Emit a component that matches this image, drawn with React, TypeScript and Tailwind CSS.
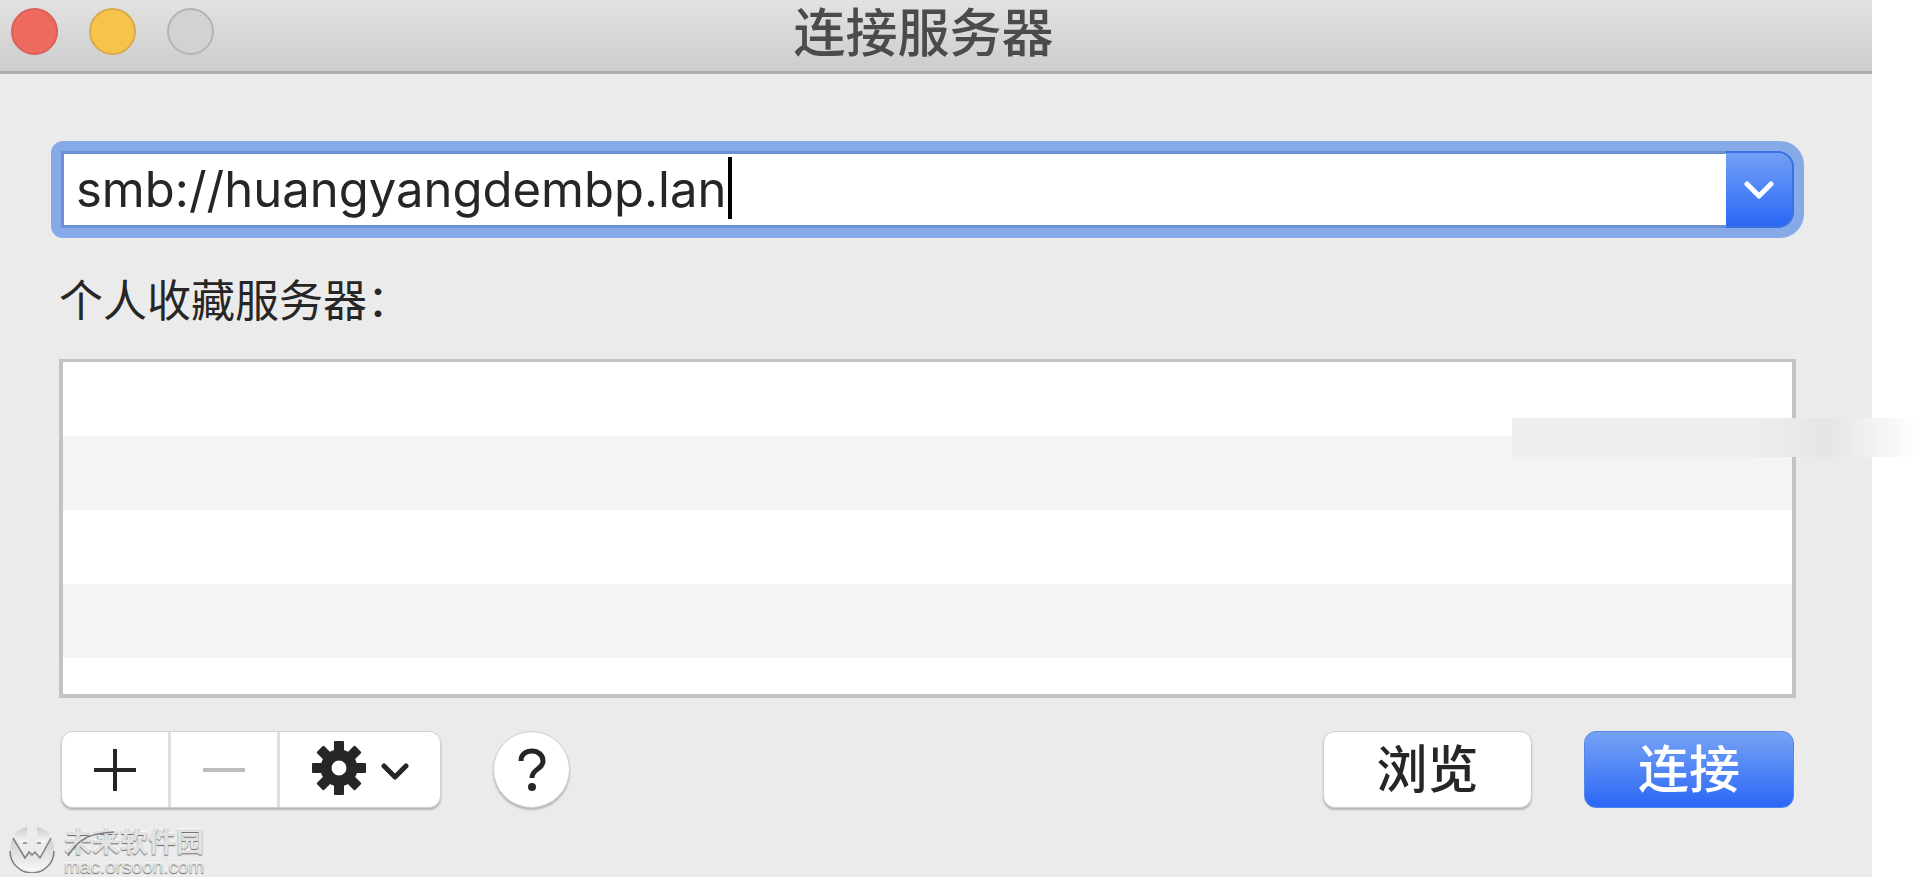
import React, { useState } from 'react';

const GearIcon = () => {
  const teeth = [0, 45, 90, 135, 180, 225, 270, 315];

  return (
    <svg viewBox="0 0 56 56" className="w-14 h-14" fill="#262626" aria-hidden="true">
      {teeth.map((angle) => (
        <rect key={angle} x="23" y="1" width="10" height="14" rx="1" transform={`rotate(${angle} 28 28)`} />
      ))}
      <circle cx="28" cy="28" r="13" fill="none" stroke="#262626" strokeWidth="11" />
    </svg>
  );
};

const Watermark = () => {
  return (
    <div className="absolute left-2 bottom-0.5 flex items-center gap-2">
      <svg viewBox="0 0 48 48" className="w-12 h-12" aria-hidden="true">
        <defs>
          <linearGradient id="badge" x1="0" y1="0" x2="0" y2="1">
            <stop offset="0" stopColor="#cdcdcd" />
            <stop offset="1" stopColor="#f8f8f8" />
          </linearGradient>
        </defs>
        <path d="M19 2 V18 H12 L6 9 A23 23 0 0 1 19 2 Z" fill="url(#badge)" />
        <path d="M29 2 V18 H36 L42 9 A23 23 0 0 0 29 2 Z" fill="url(#badge)" />
        <path d="M5 13 L17 33 L21 27 L24 30 L27 27 L32 33 L43 13 A22 22 0 0 1 46 24 A22 22 0 0 1 2 24 A22 22 0 0 1 5 13 Z" fill="url(#badge)" />
        <path d="M2 26 A22 22 0 0 0 46 26" fill="none" stroke="#7f7f7f" strokeWidth="1.500" />
        <path d="M5 13 L17 33 L21 27 L24 30 L27 27 L32 33 L43 13" fill="none" stroke="#7f7f7f" strokeWidth="1.500" />
        <path d="M15 18 H19 M29 18 H33" stroke="#808080" strokeWidth="1.500" />
      </svg>
      <div className="relative flex flex-col font-['Liberation_Sans','Noto_Sans_CJK_SC',sans-serif] text-[#e2e2e2] [text-shadow:0_1px_1px_#666,0_-1px_0_#fafafa]">
        <span className="pt-1 text-[28px] leading-8 font-bold">未来软件园</span>
        <span className="text-[19px] leading-4">mac.orsoon.com</span>
        <svg viewBox="0 0 56 32" className="absolute left-0 top-1 w-14 h-8" fill="none" stroke="#7f7f7f" strokeWidth="1.500" aria-hidden="true">
          <path d="M4 29 C14 12 26 6 50 5" />
        </svg>
      </div>
    </div>
  );
};

const App = () => {
  const [address, setAddress] = useState('smb://huangyangdembp.lan');
  const rows = ['bg-white', 'bg-[#f4f4f4]', 'bg-white', 'bg-[#f4f4f4]'];

  return (
    <div className="relative min-h-screen bg-white pr-12 font-['Inter','Noto_Sans_CJK_SC',sans-serif] text-[#262626]">
      <div className="min-h-screen bg-[#ebebeb]">
        <header className="grid grid-cols-[1fr_auto_1fr] items-center h-[74px] pl-[11px] pr-9 pb-2 border-b-3 border-[#acacac] bg-linear-to-b from-[#e2e2e2] to-[#cdcdcd]">
          <div className="flex gap-[31px]">
            <button aria-label="关闭" className="w-[47px] h-[47px] rounded-full border-2 border-[#d9605a] bg-[#ee6a5f]" />
            <button aria-label="最小化" className="w-[47px] h-[47px] rounded-full border-2 border-[#d9a94c] bg-[#f6c34b]" />
            <button aria-label="缩放" disabled className="w-[47px] h-[47px] rounded-full border-2 border-[#b4b4b4] bg-[#d2d2d2]" />
          </div>
          <h1 className="pt-1 text-[52px] leading-[58px] font-medium text-[#4b4b4b]">连接服务器</h1>
        </header>

        <main className="pt-[67px] pl-[51px] pr-[68px]">
          <div className="flex h-[97px] p-[10px] rounded-l-xl rounded-r-3xl bg-[#86a9e8]">
            <div className="flex flex-1 items-center border-3 border-r-0 border-[#6b91d3] bg-white pl-3">
              <input
                aria-label="服务器地址"
                value={address}
                onChange={(e) => setAddress(e.target.value)}
                className="[field-sizing:content] h-[70px] text-[49px] caret-transparent outline-none"
              />
              <span className="w-1 h-[62px] ml-0.5 mb-1 bg-black" />
            </div>
            <button
              aria-label="最近使用的服务器"
              className="flex items-center justify-center w-[68px] rounded-r-2xl border-2 border-l-0 border-[#3c70e0] bg-linear-to-b from-[#729ff5] to-[#2b66f6]"
            >
              <svg viewBox="0 0 30 20" className="w-[30px] h-5" fill="none" stroke="white" strokeWidth="5" strokeLinecap="round" strokeLinejoin="round">
                <path d="M3 4 L15 16 L27 4" />
              </svg>
            </button>
          </div>

          <div className="pl-2">
            <h2 className="pt-[33px] text-[44px] leading-[60px]">个人收藏服务器：</h2>
            <ul className="mt-7 mr-2 h-[339px] overflow-hidden border-4 border-t-3 border-[#c3c3c3] bg-white">
              {rows.map((color, index) => (
                <li key={index} className={`h-[74px] ${color}`} />
              ))}
            </ul>

            <div className="flex items-center mt-[33px] ml-[2px] mr-[10px]">
              <div className="flex h-[77px] rounded-xl border border-[#cfcfcf] bg-white shadow-[0_2px_2px_#b5b5b5]">
                <button aria-label="添加" className="flex items-center justify-center w-[109px] border-r-3 border-[#e0e0e0]">
                  <svg viewBox="0 0 44 44" className="w-11 h-11" stroke="#262626" strokeWidth="4">
                    <path d="M1 22 H43 M22 1 V43" />
                  </svg>
                </button>
                <button aria-label="移除" disabled className="flex items-center justify-center w-[109px] border-r-3 border-[#e0e0e0]">
                  <svg viewBox="0 0 44 44" className="w-11 h-11" stroke="#bdbdbd" strokeWidth="4">
                    <path d="M1 22 H43" />
                  </svg>
                </button>
                <button aria-label="更多操作" className="flex items-center justify-center gap-[14px] w-[160px] pb-1">
                  <GearIcon />
                  <svg viewBox="0 0 28 20" className="w-7 h-5 mt-2" fill="none" stroke="#262626" strokeWidth="5" strokeLinecap="round" strokeLinejoin="round">
                    <path d="M3 4 L14 15 L25 4" />
                  </svg>
                </button>
              </div>
              <button
                aria-label="帮助"
                className="flex items-center justify-center w-[77px] h-[77px] ml-[52px] rounded-full border border-[#cfcfcf] bg-white shadow-[0_2px_2px_#b5b5b5]"
              >
                <svg viewBox="0 0 28 44" className="w-7 h-11" fill="none" stroke="#262626" strokeWidth="5">
                  <path d="M3 13 C3 6 8 3 14 3 C20 3 25 7 25 13 C25 22 14 20 14 30" />
                  <circle cx="14" cy="39" r="4" fill="#262626" stroke="none" />
                </svg>
              </button>
              <button className="ml-auto w-[209px] h-[77px] rounded-xl border border-[#cfcfcf] bg-white text-[51px] leading-[72px] font-medium shadow-[0_2px_2px_#b5b5b5]">
                浏览
              </button>
              <button className="ml-[52px] w-[210px] h-[77px] rounded-xl border border-[#5585e6] bg-linear-to-b from-[#76a1f4] to-[#2b66f6] text-[51px] leading-[72px] font-medium text-white">
                连接
              </button>
            </div>
          </div>
        </main>
      </div>

      {/* soft grey band that runs over the right edge of the list */}
      <div className="absolute top-[418px] right-1 w-[404px] h-[39px] bg-linear-to-r from-[#eeeeee] from-60% via-[#e5e5e5] via-78% to-white" />
      <Watermark />
    </div>
  );
};

export default App;
